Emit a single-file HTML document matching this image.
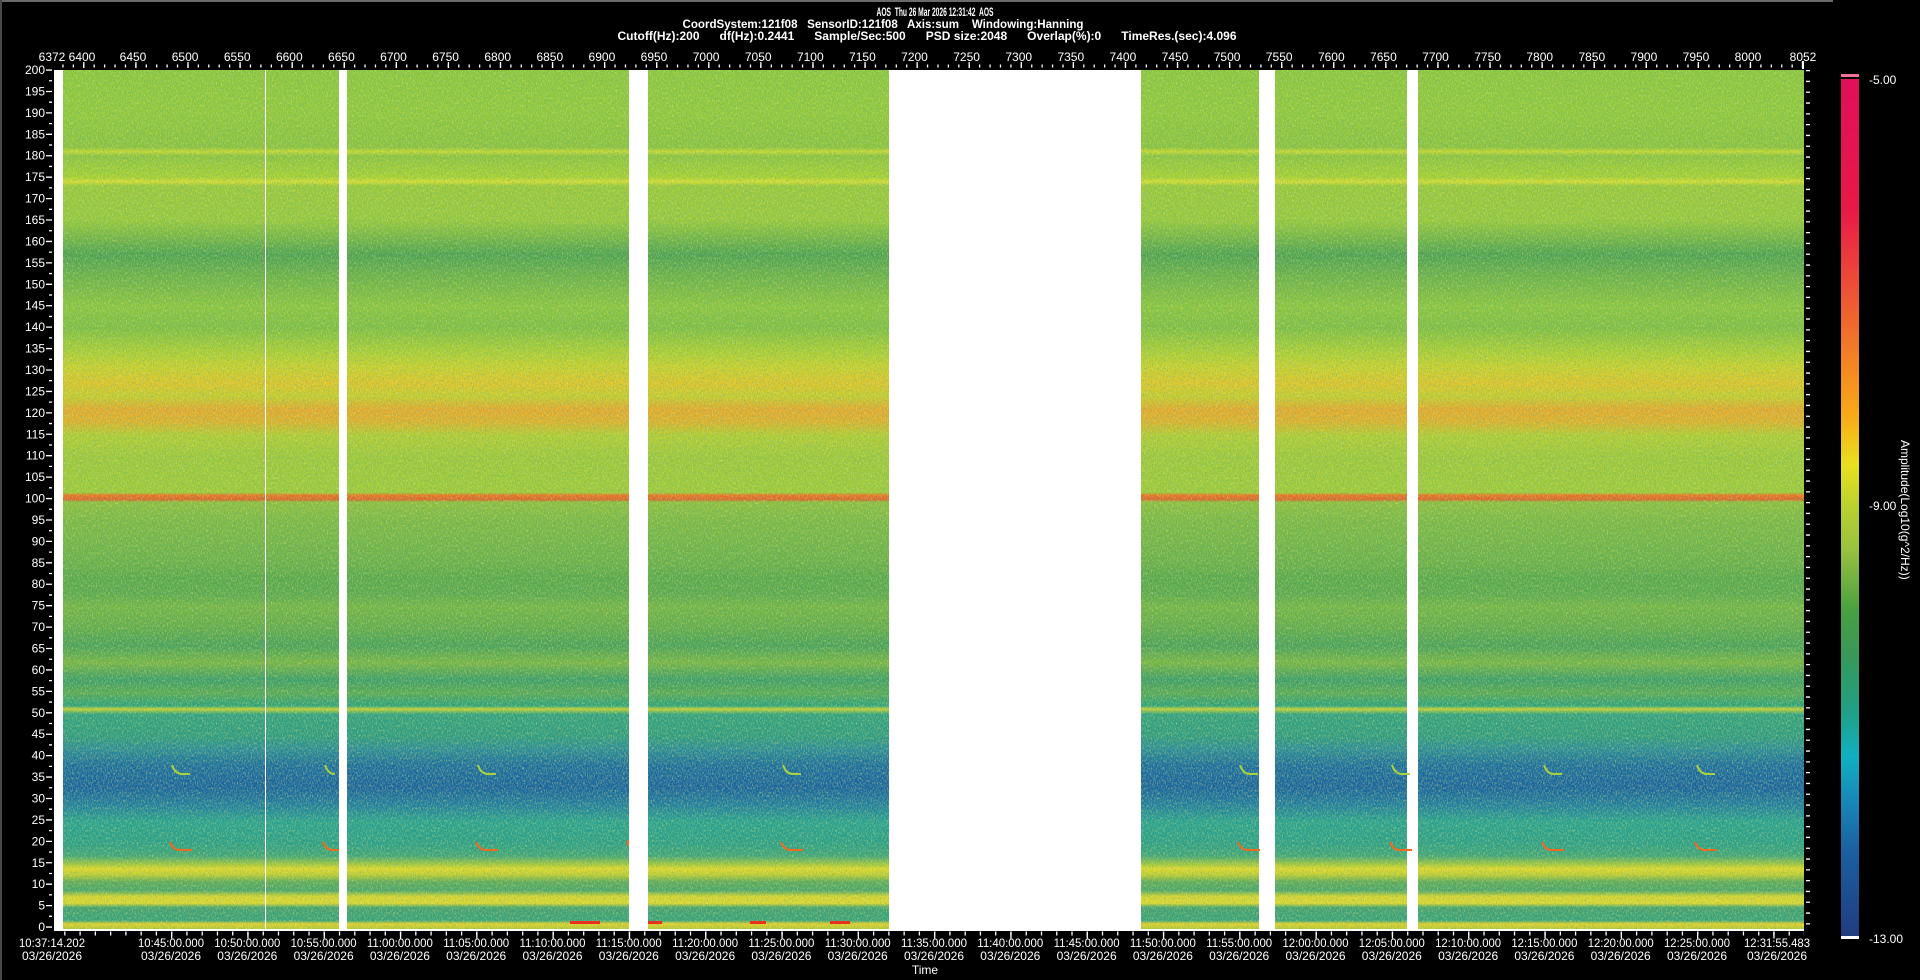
<!DOCTYPE html>
<html><head><meta charset="utf-8"><style>
html,body{margin:0;padding:0;background:#000;width:1920px;height:980px;overflow:hidden}
svg{display:block}
text{font-family:"Liberation Sans Narrow","Liberation Sans",sans-serif;fill:#fff;font-size:12px;white-space:pre}
.b{font-weight:bold}
</style></head><body>
<svg width="1920" height="980" viewBox="0 0 1920 980" xmlns="http://www.w3.org/2000/svg" xml:space="preserve">
<defs>
<linearGradient id="spec" x1="0" y1="0" x2="0" y2="1">
<stop offset="0%" stop-color="#8ec63c"/>
<stop offset="5%" stop-color="#92c83a"/>
<stop offset="9%" stop-color="#8cc23e"/>
<stop offset="9.5%" stop-color="#c8d830"/>
<stop offset="10%" stop-color="#8ec43e"/>
<stop offset="12.5%" stop-color="#a8d030"/>
<stop offset="13%" stop-color="#d8dc30"/>
<stop offset="13.5%" stop-color="#9cc83a"/>
<stop offset="17.5%" stop-color="#98c83a"/>
<stop offset="20%" stop-color="#6cb048"/>
<stop offset="21.5%" stop-color="#4ea050"/>
<stop offset="24%" stop-color="#6cb048"/>
<stop offset="27.5%" stop-color="#8cc43e"/>
<stop offset="30%" stop-color="#80be42"/>
<stop offset="32.5%" stop-color="#a8cc34"/>
<stop offset="34.5%" stop-color="#c8d02c"/>
<stop offset="36.5%" stop-color="#e0c428"/>
<stop offset="38%" stop-color="#c8cc2c"/>
<stop offset="39.5%" stop-color="#e8a82a"/>
<stop offset="41%" stop-color="#e0b02a"/>
<stop offset="42.5%" stop-color="#b4cc32"/>
<stop offset="45%" stop-color="#a0c83a"/>
<stop offset="49.2%" stop-color="#a0ca38"/>
<stop offset="49.5%" stop-color="#f07020"/>
<stop offset="50%" stop-color="#e06028"/>
<stop offset="50.3%" stop-color="#8ebe3e"/>
<stop offset="52.5%" stop-color="#7cb844"/>
<stop offset="55%" stop-color="#74b446"/>
<stop offset="57.5%" stop-color="#6aae48"/>
<stop offset="59%" stop-color="#5aa84a"/>
<stop offset="61%" stop-color="#5ca84c"/>
<stop offset="62.5%" stop-color="#74b444"/>
<stop offset="65%" stop-color="#62aa4a"/>
<stop offset="67%" stop-color="#4aa05a"/>
<stop offset="69%" stop-color="#78b444"/>
<stop offset="71%" stop-color="#3c9c68"/>
<stop offset="72.5%" stop-color="#58a856"/>
<stop offset="74%" stop-color="#2aa07c"/>
<stop offset="74.4%" stop-color="#c8d034"/>
<stop offset="75%" stop-color="#30a080"/>
<stop offset="77.5%" stop-color="#2e9a80"/>
<stop offset="79%" stop-color="#2a8a98"/>
<stop offset="81%" stop-color="#1a6aa0"/>
<stop offset="83.5%" stop-color="#1860a0"/>
<stop offset="85.5%" stop-color="#1e7aa0"/>
<stop offset="87.5%" stop-color="#28a090"/>
<stop offset="90%" stop-color="#2a9e88"/>
<stop offset="91.5%" stop-color="#40a478"/>
<stop offset="92.5%" stop-color="#a8c838"/>
<stop offset="93%" stop-color="#e4d828"/>
<stop offset="93.7%" stop-color="#c0cc30"/>
<stop offset="94.5%" stop-color="#60aa58"/>
<stop offset="95.5%" stop-color="#4aa46a"/>
<stop offset="96.2%" stop-color="#d8d42c"/>
<stop offset="97%" stop-color="#e0d82c"/>
<stop offset="97.5%" stop-color="#44a070"/>
<stop offset="99%" stop-color="#36a07a"/>
<stop offset="99.4%" stop-color="#e8d028"/>
<stop offset="100%" stop-color="#b8c830"/>
</linearGradient>
<linearGradient id="cb" x1="0" y1="0" x2="0" y2="1">
<stop offset="0%" stop-color="#e0105a"/>
<stop offset="15%" stop-color="#e81848"/>
<stop offset="31%" stop-color="#f07828"/>
<stop offset="39%" stop-color="#f8a818"/>
<stop offset="45%" stop-color="#e8e020"/>
<stop offset="50%" stop-color="#b8d030"/>
<stop offset="55%" stop-color="#98c040"/>
<stop offset="62%" stop-color="#48a040"/>
<stop offset="67%" stop-color="#389858"/>
<stop offset="74%" stop-color="#20a088"/>
<stop offset="79%" stop-color="#10b0c0"/>
<stop offset="84%" stop-color="#1888b8"/>
<stop offset="90%" stop-color="#1a60a0"/>
<stop offset="100%" stop-color="#203c80"/>
</linearGradient>
<filter id="noiseY" x="0" y="0" width="100%" height="100%">
<feTurbulence type="fractalNoise" baseFrequency="0.8 0.4" numOctaves="2" seed="7"/>
<feColorMatrix type="matrix" values="0 0 0 0 0.9  0 0 0 0 0.88  0 0 0 0 0.2  2.6 0 0 0 -1.2"/>
</filter>
<filter id="noiseD" x="0" y="0" width="100%" height="100%">
<feTurbulence type="fractalNoise" baseFrequency="0.9 0.5" numOctaves="2" seed="3"/>
<feColorMatrix type="matrix" values="0 0 0 0 0.1  0 0 0 0 0.45  0 0 0 0 0.3  2.4 0 0 0 -1.15"/>
</filter>
</defs>

<rect x="0" y="0" width="1833" height="2" fill="#6a6a6a"/>
<rect x="0" y="0" width="2" height="980" fill="#4a4a4a"/>

<text class="b" x="935" y="16" text-anchor="middle" font-size="11" textLength="117" lengthAdjust="spacingAndGlyphs">AOS  Thu 26 Mar 2026 12:31:42  AOS</text>
<text class="b" x="883" y="28" text-anchor="middle" font-size="11" textLength="401" lengthAdjust="spacingAndGlyphs">CoordSystem:121f08   SensorID:121f08   Axis:sum    Windowing:Hanning</text>
<text class="b" x="927" y="40" text-anchor="middle" font-size="11" textLength="619" lengthAdjust="spacingAndGlyphs">Cutoff(Hz):200      df(Hz):0.2441      Sample/Sec:500      PSD size:2048      Overlap(%):0      TimeRes.(sec):4.096</text>

<rect x="54" y="70" width="1750" height="861" fill="#fff"/>
<rect x="63" y="70" width="1741" height="859" fill="url(#spec)"/>
<rect x="63" y="70" width="1741" height="859" filter="url(#noiseD)" opacity="0.75"/>
<rect x="63" y="70" width="1741" height="859" filter="url(#noiseY)" opacity="0.45"/>
<rect x="339" y="70" width="8" height="861" fill="#fff"/>
<rect x="629" y="70" width="19" height="861" fill="#fff"/>
<rect x="889" y="70" width="252" height="861" fill="#fff"/>
<rect x="1259" y="70" width="16" height="861" fill="#fff"/>
<rect x="1407" y="70" width="11" height="861" fill="#fff"/>
<rect x="265" y="70" width="1" height="861" fill="#fff"/>

<g fill="none" stroke="#f06a20" stroke-width="2">
<path d="M170 842 q3 8 10 8 h12"/><path d="M323 842 q3 8 10 8 h6"/><path d="M476 842 q3 8 10 8 h12"/><path d="M628 840 v6"/><path d="M781 842 q3 8 10 8 h12"/><path d="M1238 842 q3 8 10 8 h12"/><path d="M1390 842 q3 8 10 8 h12"/><path d="M1542 842 q3 8 10 8 h12"/><path d="M1695 842 q3 8 10 8 h12"/>
</g>
<g fill="none" stroke="#a8d040" stroke-width="2">
<path d="M172 765 q3 9 10 9 h8"/><path d="M325 765 q3 9 10 9"/><path d="M478 765 q3 9 10 9 h8"/><path d="M783 765 q3 9 10 9 h8"/><path d="M1240 765 q3 9 10 9 h8"/><path d="M1392 765 q3 9 10 9 h8"/><path d="M1544 765 q3 9 10 9 h8"/><path d="M1697 765 q3 9 10 9 h8"/>
</g>
<g fill="#e83020">
<rect x="570" y="921" width="30" height="3"/><rect x="648" y="921" width="14" height="3"/><rect x="750" y="921" width="16" height="3"/><rect x="830" y="921" width="20" height="3"/>
</g>

<line x1="49" y1="69.4" x2="49" y2="929" stroke="#fff" stroke-width="6" stroke-dasharray="1.3 20.125"/>
<line x1="50.5" y1="80.1" x2="50.5" y2="929" stroke="#fff" stroke-width="3" stroke-dasharray="1.3 20.125"/>
<g text-anchor="end" font-size="12">
<text x="45" y="74">200</text><text x="45" y="95.4">195</text><text x="45" y="116.9">190</text><text x="45" y="138.3">185</text><text x="45" y="159.7">180</text><text x="45" y="181.1">175</text><text x="45" y="202.6">170</text><text x="45" y="224">165</text><text x="45" y="245.4">160</text><text x="45" y="266.8">155</text><text x="45" y="288.3">150</text><text x="45" y="309.7">145</text><text x="45" y="331.1">140</text><text x="45" y="352.5">135</text><text x="45" y="374">130</text><text x="45" y="395.4">125</text><text x="45" y="416.8">120</text><text x="45" y="438.3">115</text><text x="45" y="459.7">110</text><text x="45" y="481.1">105</text><text x="45" y="502.5">100</text><text x="45" y="524">95</text><text x="45" y="545.4">90</text><text x="45" y="566.8">85</text><text x="45" y="588.2">80</text><text x="45" y="609.7">75</text><text x="45" y="631.1">70</text><text x="45" y="652.5">65</text><text x="45" y="674">60</text><text x="45" y="695.4">55</text><text x="45" y="716.8">50</text><text x="45" y="738.2">45</text><text x="45" y="759.7">40</text><text x="45" y="781.1">35</text><text x="45" y="802.5">30</text><text x="45" y="824">25</text><text x="45" y="845.4">20</text><text x="45" y="866.8">15</text><text x="45" y="888.2">10</text><text x="45" y="909.7">5</text><text x="45" y="931">0</text>
</g>

<line x1="62.3" y1="66" x2="1804" y2="66" stroke="#fff" stroke-width="3" stroke-dasharray="1.3 9.117"/>
<line x1="83.2" y1="65" x2="1804" y2="65" stroke="#fff" stroke-width="6" stroke-dasharray="1.3 50.78"/>
<rect x="1802" y="61" width="2" height="8" fill="#fff"/>
<g text-anchor="middle" font-size="12">
<text x="52" y="61">6372</text><text x="82" y="61">6400</text><text x="133" y="61">6450</text><text x="185.1" y="61">6500</text><text x="237.2" y="61">6550</text><text x="289.3" y="61">6600</text><text x="341.4" y="61">6650</text><text x="393.5" y="61">6700</text><text x="445.6" y="61">6750</text><text x="497.7" y="61">6800</text><text x="549.8" y="61">6850</text><text x="601.9" y="61">6900</text><text x="654" y="61">6950</text><text x="706.1" y="61">7000</text><text x="758.2" y="61">7050</text><text x="810.3" y="61">7100</text><text x="862.4" y="61">7150</text><text x="914.5" y="61">7200</text><text x="966.6" y="61">7250</text><text x="1018.7" y="61">7300</text><text x="1070.8" y="61">7350</text><text x="1122.9" y="61">7400</text><text x="1175" y="61">7450</text><text x="1227.1" y="61">7500</text><text x="1279.2" y="61">7550</text><text x="1331.3" y="61">7600</text><text x="1383.4" y="61">7650</text><text x="1435.5" y="61">7700</text><text x="1487.6" y="61">7750</text><text x="1539.7" y="61">7800</text><text x="1591.8" y="61">7850</text><text x="1643.9" y="61">7900</text><text x="1696" y="61">7950</text><text x="1748" y="61">8000</text><text x="1803" y="61">8052</text>
</g>

<line x1="64.2" y1="933.5" x2="1804" y2="933.5" stroke="#fff" stroke-width="4" stroke-dasharray="1.3 13.96"/>
<line x1="171" y1="935" x2="1804" y2="935" stroke="#fff" stroke-width="7" stroke-dasharray="1.3 75"/>
<g text-anchor="middle" font-size="12">
<text x="52" y="947" textLength="66" lengthAdjust="spacingAndGlyphs">10:37:14.202</text><text x="52" y="960">03/26/2026</text>
<text x="171" y="947" textLength="66" lengthAdjust="spacingAndGlyphs">10:45:00.000</text><text x="171" y="960">03/26/2026</text>
<text x="247.3" y="947" textLength="66" lengthAdjust="spacingAndGlyphs">10:50:00.000</text><text x="247.3" y="960">03/26/2026</text>
<text x="323.6" y="947" textLength="66" lengthAdjust="spacingAndGlyphs">10:55:00.000</text><text x="323.6" y="960">03/26/2026</text>
<text x="399.9" y="947" textLength="66" lengthAdjust="spacingAndGlyphs">11:00:00.000</text><text x="399.9" y="960">03/26/2026</text>
<text x="476.2" y="947" textLength="66" lengthAdjust="spacingAndGlyphs">11:05:00.000</text><text x="476.2" y="960">03/26/2026</text>
<text x="552.5" y="947" textLength="66" lengthAdjust="spacingAndGlyphs">11:10:00.000</text><text x="552.5" y="960">03/26/2026</text>
<text x="628.8" y="947" textLength="66" lengthAdjust="spacingAndGlyphs">11:15:00.000</text><text x="628.8" y="960">03/26/2026</text>
<text x="705.1" y="947" textLength="66" lengthAdjust="spacingAndGlyphs">11:20:00.000</text><text x="705.1" y="960">03/26/2026</text>
<text x="781.4" y="947" textLength="66" lengthAdjust="spacingAndGlyphs">11:25:00.000</text><text x="781.4" y="960">03/26/2026</text>
<text x="857.7" y="947" textLength="66" lengthAdjust="spacingAndGlyphs">11:30:00.000</text><text x="857.7" y="960">03/26/2026</text>
<text x="934" y="947" textLength="66" lengthAdjust="spacingAndGlyphs">11:35:00.000</text><text x="934" y="960">03/26/2026</text>
<text x="1010.3" y="947" textLength="66" lengthAdjust="spacingAndGlyphs">11:40:00.000</text><text x="1010.3" y="960">03/26/2026</text>
<text x="1086.6" y="947" textLength="66" lengthAdjust="spacingAndGlyphs">11:45:00.000</text><text x="1086.6" y="960">03/26/2026</text>
<text x="1162.9" y="947" textLength="66" lengthAdjust="spacingAndGlyphs">11:50:00.000</text><text x="1162.9" y="960">03/26/2026</text>
<text x="1239.2" y="947" textLength="66" lengthAdjust="spacingAndGlyphs">11:55:00.000</text><text x="1239.2" y="960">03/26/2026</text>
<text x="1315.5" y="947" textLength="66" lengthAdjust="spacingAndGlyphs">12:00:00.000</text><text x="1315.5" y="960">03/26/2026</text>
<text x="1391.8" y="947" textLength="66" lengthAdjust="spacingAndGlyphs">12:05:00.000</text><text x="1391.8" y="960">03/26/2026</text>
<text x="1468.1" y="947" textLength="66" lengthAdjust="spacingAndGlyphs">12:10:00.000</text><text x="1468.1" y="960">03/26/2026</text>
<text x="1544.4" y="947" textLength="66" lengthAdjust="spacingAndGlyphs">12:15:00.000</text><text x="1544.4" y="960">03/26/2026</text>
<text x="1620.7" y="947" textLength="66" lengthAdjust="spacingAndGlyphs">12:20:00.000</text><text x="1620.7" y="960">03/26/2026</text>
<text x="1697" y="947" textLength="66" lengthAdjust="spacingAndGlyphs">12:25:00.000</text><text x="1697" y="960">03/26/2026</text>
<text x="1777" y="947" textLength="66" lengthAdjust="spacingAndGlyphs">12:31:55.483</text><text x="1777" y="960">03/26/2026</text>
<text x="925" y="974" font-size="11">Time</text>
</g>

<line x1="1808" y1="70" x2="1808" y2="929" stroke="#fff" stroke-width="4" stroke-dasharray="1.3 9.5"/>

<rect x="1841" y="74" width="18" height="3" fill="#f0709a"/>
<rect x="1841" y="79" width="18" height="858" fill="url(#cb)"/>
<rect x="1841" y="936" width="18" height="3" fill="#fff"/>
<text x="1869" y="84" font-size="12">-5.00</text>
<text x="1869" y="510" font-size="12">-9.00</text>
<text x="1869" y="943" font-size="12">-13.00</text>
<text x="0" y="0" font-size="11" transform="translate(1901 440) rotate(90)">Amplitude(Log10(g^2/Hz))</text>
</svg>
</body></html>
